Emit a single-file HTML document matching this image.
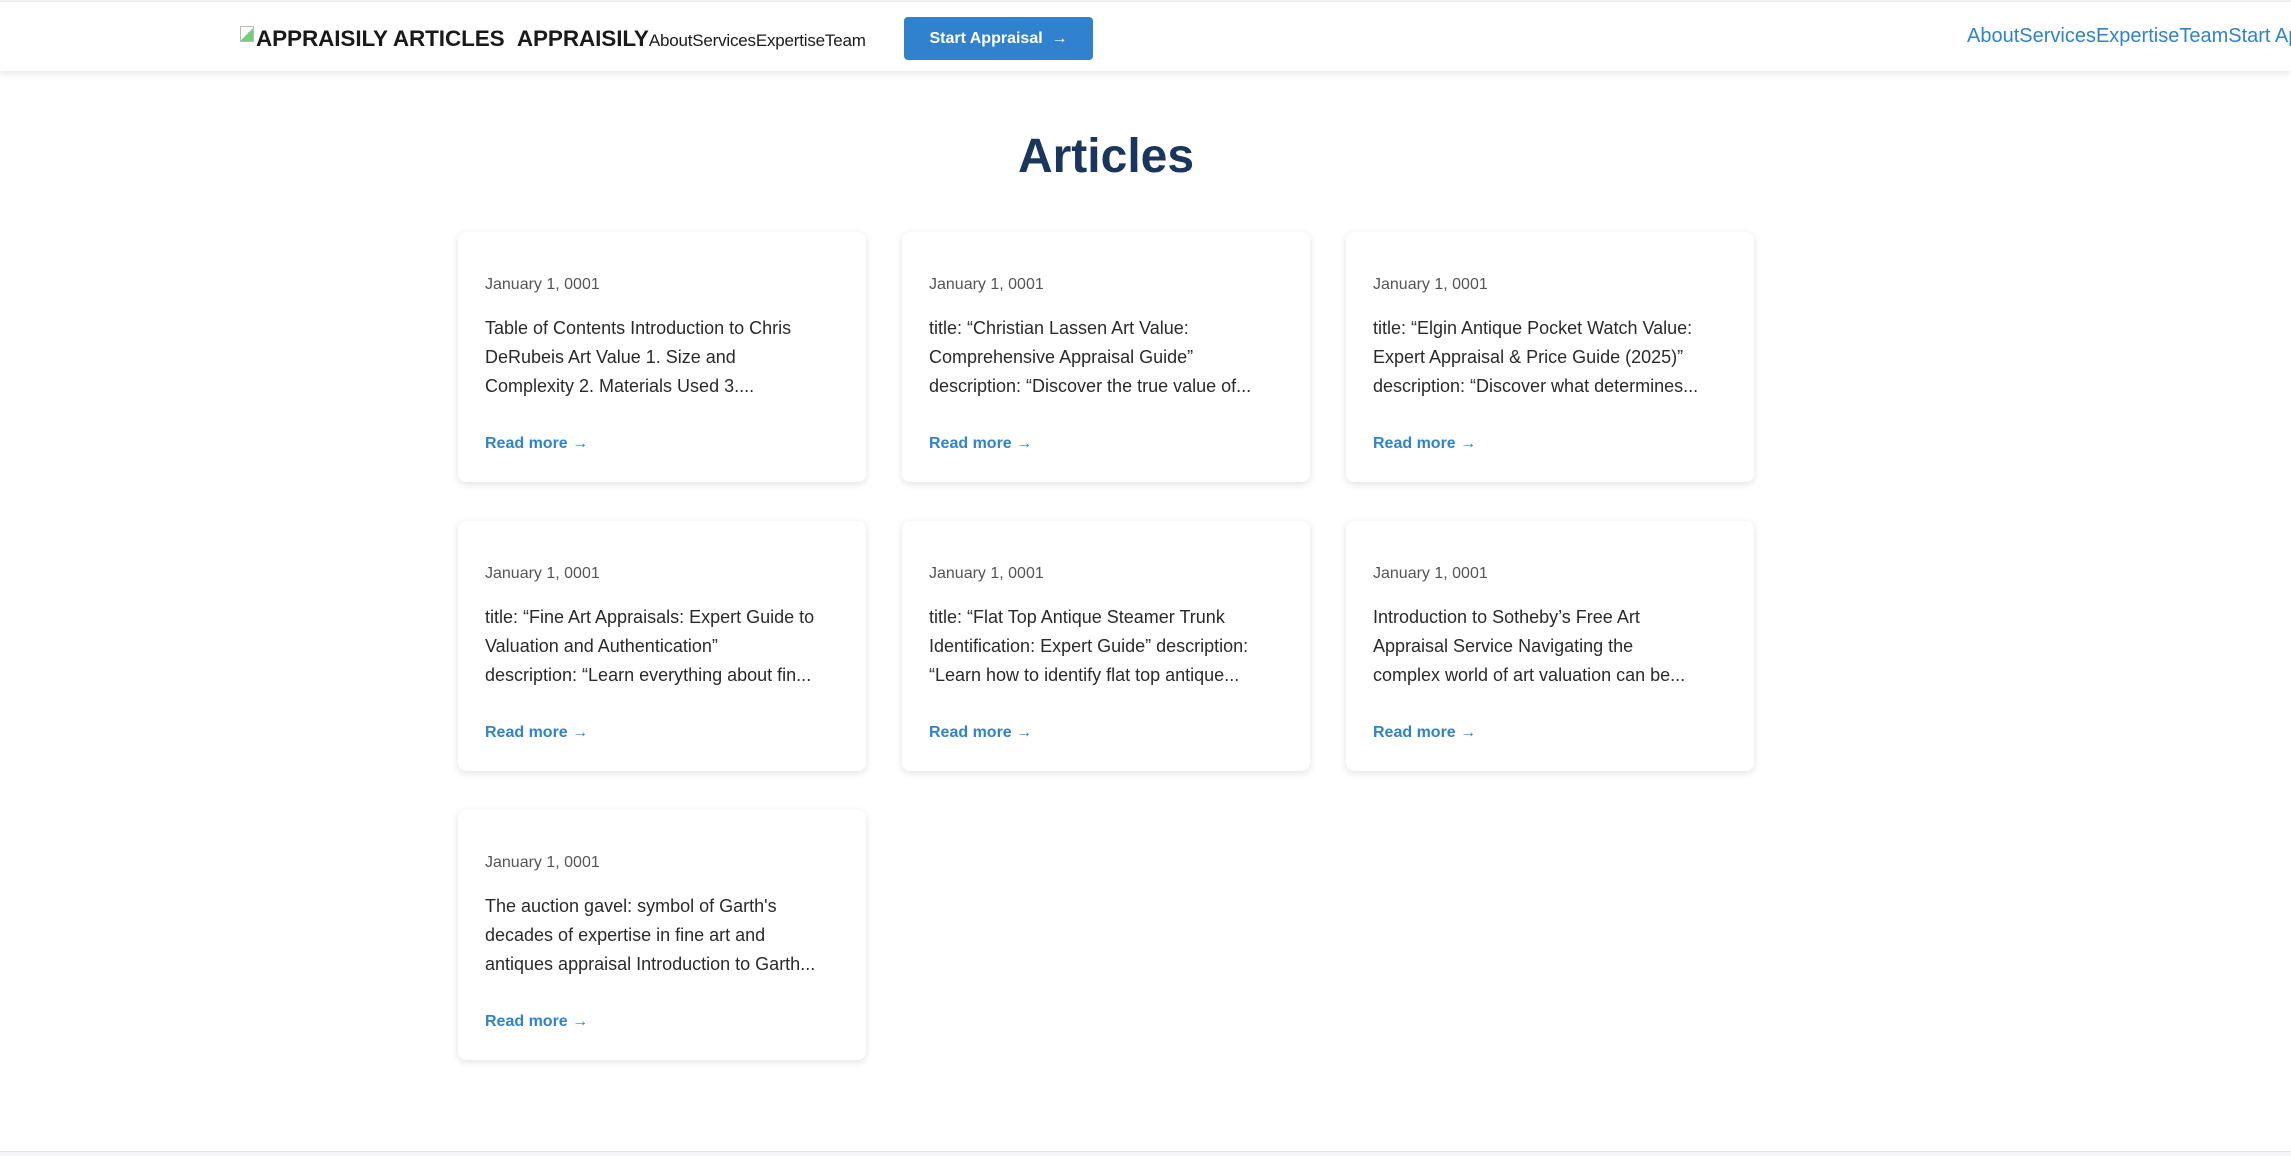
<!DOCTYPE html>
<html><head><meta charset="utf-8"><style>
*{margin:0;padding:0;box-sizing:border-box}
body{width:2291px;height:1156px;overflow:hidden;background:#fff;font-family:"Liberation Sans",sans-serif;position:relative}
.hdr{position:absolute;left:0;top:0;width:2291px;height:71px;background:#fff;box-shadow:0 3px 6px rgba(0,0,0,0.09);border-top:2px solid #eee}
.logo{position:absolute;left:240px;top:24px;font-size:22.5px;font-weight:bold;color:#1a1a1a;white-space:nowrap;letter-spacing:-0.1px}
.logo .ico{display:inline-block;width:14px;height:16px;border:1px solid #bbb;vertical-align:top;margin-right:2px;background:linear-gradient(135deg,#fff 50%,#7c7 50%)}
.logo .nav{font-size:17px;font-weight:normal;letter-spacing:-0.2px}
.btn{position:absolute;left:904px;top:15px;width:189px;height:43px;background:#3182ce;border-radius:4px;color:#fff;font-weight:bold;font-size:16px;line-height:43px;text-align:center}
.rnav{position:absolute;left:1967px;top:23px;font-size:20px;color:#3182ce;white-space:nowrap}
h1{position:absolute;left:0;width:2212px;top:129px;text-align:center;font-size:48px;color:#1a365d;font-weight:bold}
.card{position:absolute;width:408px;height:250px;background:#fff;border-radius:8px;box-shadow:0 2px 8px rgba(0,0,0,0.12);padding:44px 20px 0 27px}
.d{font-size:16px;color:#555;height:20px}
.t{margin-top:18px;font-size:18px;line-height:29px;color:#2a2a2a;height:87px;white-space:nowrap;overflow:hidden}
.r{margin-top:34px;font-size:16px;font-weight:bold;color:#3182ce}
.foot{position:absolute;left:0;top:1151px;width:2291px;height:5px;background:#f5f5fa;border-top:1px solid #e4e4ee}
</style></head><body>
<div class="hdr">
<div class="logo"><span class="ico"></span>APPRAISILY ARTICLES &nbsp;APPRAISILY<span class="nav">AboutServicesExpertiseTeam</span></div>
<div class="btn">Start Appraisal &nbsp;→</div>
<div class="rnav">AboutServicesExpertiseTeamStart Appraisal</div>
</div>
<h1>Articles</h1>
<div class="card" style="left:458px;top:232px"><div class="d">January 1, 0001</div><div class="t">Table of Contents Introduction to Chris<br>DeRubeis Art Value 1. Size and<br>Complexity 2. Materials Used 3....</div><div class="r">Read more →</div></div>
<div class="card" style="left:902px;top:232px"><div class="d">January 1, 0001</div><div class="t">title: “Christian Lassen Art Value:<br>Comprehensive Appraisal Guide”<br>description: “Discover the true value of...</div><div class="r">Read more →</div></div>
<div class="card" style="left:1346px;top:232px"><div class="d">January 1, 0001</div><div class="t">title: “Elgin Antique Pocket Watch Value:<br>Expert Appraisal &amp; Price Guide (2025)”<br>description: “Discover what determines...</div><div class="r">Read more →</div></div>
<div class="card" style="left:458px;top:521px"><div class="d">January 1, 0001</div><div class="t">title: “Fine Art Appraisals: Expert Guide to<br>Valuation and Authentication”<br>description: “Learn everything about fin...</div><div class="r">Read more →</div></div>
<div class="card" style="left:902px;top:521px"><div class="d">January 1, 0001</div><div class="t">title: “Flat Top Antique Steamer Trunk<br>Identification: Expert Guide” description:<br>“Learn how to identify flat top antique...</div><div class="r">Read more →</div></div>
<div class="card" style="left:1346px;top:521px"><div class="d">January 1, 0001</div><div class="t">Introduction to Sotheby’s Free Art<br>Appraisal Service Navigating the<br>complex world of art valuation can be...</div><div class="r">Read more →</div></div>
<div class="card" style="left:458px;top:810px"><div class="d">January 1, 0001</div><div class="t">The auction gavel: symbol of Garth's<br>decades of expertise in fine art and<br>antiques appraisal Introduction to Garth...</div><div class="r">Read more →</div></div>
<div class="foot"></div>
</body></html>
